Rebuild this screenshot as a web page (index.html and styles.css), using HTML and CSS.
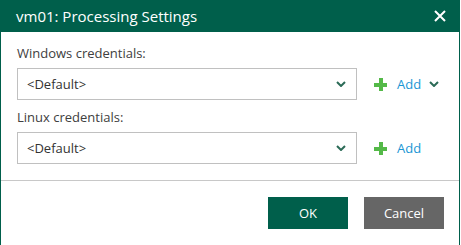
FILE: index.html
```html
<!DOCTYPE html>
<html lang="en">

<head>
    <meta charset="UTF-8">
    <title>vm01: Processing Settings</title>
    <link rel="stylesheet" href="styles.css">
</head>

<body>
    <div class="dialog">
        <header class="title-bar">
            <span class="title">vm01: Processing Settings</span>
            <svg class="close" width="12" height="12" viewBox="0 0 12 12">
                <path d="M1 1 L11 11 M11 1 L1 11" stroke="#fff" stroke-width="2" fill="none" />
            </svg>
        </header>

        <main class="content">
            <div class="field">
                <label class="field-label">Windows credentials:</label>
                <div class="field-row">
                    <div class="select">
                        <span>&lt;Default&gt;</span>
                        <svg class="chevron" width="10" height="6" viewBox="0 0 10 6">
                            <path d="M1 1 L5 5 L9 1" stroke="#2b6b57" stroke-width="2" fill="none" />
                        </svg>
                    </div>
                    <a href="#" class="add-link">
                        <span class="plus"></span>
                        <span class="add-text">Add</span>
                        <svg class="chevron" width="10" height="6" viewBox="0 0 10 6">
                            <path d="M1 1 L5 5 L9 1" stroke="#2b6b57" stroke-width="2" fill="none" />
                        </svg>
                    </a>
                </div>
            </div>

            <div class="field">
                <label class="field-label">Linux credentials:</label>
                <div class="field-row">
                    <div class="select">
                        <span>&lt;Default&gt;</span>
                        <svg class="chevron" width="10" height="6" viewBox="0 0 10 6">
                            <path d="M1 1 L5 5 L9 1" stroke="#2b6b57" stroke-width="2" fill="none" />
                        </svg>
                    </div>
                    <a href="#" class="add-link">
                        <span class="plus"></span>
                        <span class="add-text">Add</span>
                    </a>
                </div>
            </div>
        </main>

        <footer class="actions">
            <button class="btn btn-ok">OK</button>
            <button class="btn btn-cancel">Cancel</button>
        </footer>
    </div>
</body>

</html>
```

FILE: styles.css
```css
* {
    margin: 0;
    padding: 0;
    box-sizing: border-box;
    font-family: 'Open Sans', 'Noto Sans', sans-serif;
}

body {
    background-color: #fff;
}

.dialog {
    width: 460px;
    height: 245px;
    border-left: 1px solid #005f4b;
    border-right: 1px solid #005f4b;
    display: flex;
    flex-direction: column;
}

.title-bar {
    background-color: #005f4b;
    height: 32px;
    margin: 0 -1px;
    padding: 0 14px 0 16px;
    display: flex;
    justify-content: space-between;
    align-items: center;
}

.title {
    color: #fff;
    font-size: 15px;
}

.close {
    display: block;
}

.content {
    padding: 12px 16px 0;
    border-bottom: 1px solid #c8c8c8;
    height: 149px;
}

.field {
    margin-bottom: 8px;
}

.field-label {
    display: block;
    font-size: 13px;
    color: #404040;
    line-height: 18px;
    margin-bottom: 6px;
}

.field-row {
    display: flex;
    align-items: center;
}

.select {
    width: 340px;
    height: 32px;
    border: 1px solid #c0c0c0;
    display: flex;
    justify-content: space-between;
    align-items: center;
    padding: 0 10px 0 9px;
    font-size: 13px;
    color: #333;
}

.chevron {
    display: block;
}

.add-link {
    display: flex;
    align-items: center;
    margin-left: 17px;
    text-decoration: none;
}

.plus {
    position: relative;
    width: 13px;
    height: 13px;
}

.plus::before,
.plus::after {
    content: "";
    position: absolute;
    background-color: #54b948;
}

.plus::before {
    left: 0;
    top: 5px;
    width: 13px;
    height: 4px;
}

.plus::after {
    left: 5px;
    top: 0;
    width: 4px;
    height: 13px;
}

.add-text {
    color: #1a96d4;
    font-size: 13px;
    margin: 0 8px 0 10px;
}

.actions {
    display: flex;
    justify-content: flex-end;
    gap: 16px;
    padding: 16px 15px 0;
}

.btn {
    width: 80px;
    height: 32px;
    border: none;
    color: #fff;
    font-size: 13px;
    cursor: pointer;
}

.btn-ok {
    background-color: #005f4b;
}

.btn-cancel {
    background-color: #666;
}
```
